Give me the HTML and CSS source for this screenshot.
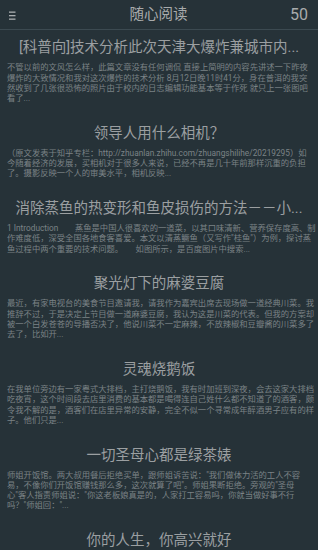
FILE: index.html
```html
<!DOCTYPE html>
<html lang="zh-CN">
<head>
<meta charset="utf-8">
<title>随心阅读</title>
<link rel="stylesheet" href="styles.css">
</head>
<body>
<div class="app">
  <header class="topbar">
    <span class="menu">
      <svg width="7" height="9" viewBox="0 0 7 9"><rect x="0" y="0.5" width="6.5" height="1.3" fill="#a9adaf"/><rect x="0" y="4" width="6.5" height="1.3" fill="#a9adaf"/><rect x="0" y="7.5" width="6.5" height="1.3" fill="#a9adaf"/></svg>
    </span>
    <span class="app-title">随心阅读</span>
    <span class="count">50</span>
  </header>
  <main class="list">
    <article class="item">
      <h2 class="item-title">[科普向]技术分析此次天津大爆炸兼城市内...</h2>
      <p class="item-body">不管以前的文风怎么样，此篇文章没有任何调侃 直接上简明的内容先讲述一下昨夜<br>爆炸的大致情况和我对这次爆炸的技术分析 8月12日晚11时41分，身在普洱的我突<br>然收到了几张很恐怖的照片由于校内的日志编辑功能基本等于作死 就只上一张图吧<br>看了...</p>
    </article>
    <article class="item">
      <h2 class="item-title">领导人用什么相机？</h2>
      <p class="item-body">（原文发表于知乎专栏：http://zhuanlan.zhihu.com/zhuangshilihe/20219295）如<br>今随着经济的发展，买相机对于很多人来说，已经不再是几十年前那样沉重的负担<br>了。摄影反映一个人的审美水平，相机反映...</p>
    </article>
    <article class="item">
      <h2 class="item-title">消除蒸鱼的热变形和鱼皮损伤的方法－－小...</h2>
      <p class="item-body">1 Introduction　　蒸鱼是中国人很喜欢的一道菜，以其口味清新、营养保存度高、制<br>作难度低，深受全国各地食客喜爱。本文以清蒸鳜鱼（又写作"桂鱼"）为例，探讨蒸<br>鱼过程中两个重要的技术问题。　　如图所示，是百度图片中搜索...</p>
    </article>
    <article class="item">
      <h2 class="item-title">聚光灯下的麻婆豆腐</h2>
      <p class="item-body">最近，有家电视台的美食节目邀请我，请我作为嘉宾出席去现场做一道经典川菜。我<br>推辞不过，于是决定上节目做一道麻婆豆腐，我认为这是川菜的代表。但我的方案却<br>被一个白发苍苍的导播否决了，他说川菜不一定麻辣，不放辣椒和豆瓣酱的川菜多了<br>去了，比如开...</p>
    </article>
    <article class="item">
      <h2 class="item-title">灵魂烧鹅饭</h2>
      <p class="item-body">在我单位旁边有一家粤式大排档，主打烧鹅饭，我有时加班到深夜，会去这家大排档<br>吃夜宵，这个时间段去店里消费的基本都是喝得连自己姓什么都不知道了的酒客，颇<br>令我不解的是，酒客们在店里异常的安静，完全不似一个寻常成年醉酒男子应有的样<br>子。他们只是...</p>
    </article>
    <article class="item">
      <h2 class="item-title">一切圣母心都是绿茶婊</h2>
      <p class="item-body">师姐开饭馆。两大叔用餐后拒绝买单，跟师姐诉苦说："我们做体力活的工人不容<br>易，不像你们开饭馆赚钱那么多，这次就算了吧"。师姐果断拒绝。旁观的"圣母<br>心"客人指责师姐说："你这老板娘真是的，人家打工容易吗，你就当做好事不行<br>吗？"师姐回："...</p>
    </article>
    <article class="item">
      <h2 class="item-title">你的人生，你高兴就好</h2>
    </article>
  </main>
</div>
</body>
</html>
```

FILE: styles.css
```css
* {
  box-sizing: border-box;
}

html, body {
  margin: 0;
  padding: 0;
  background: #263238;
}

body {
  font-family: Roboto, "Noto Sans CJK SC", sans-serif;
  width: 318px;
  height: 550px;
  overflow: hidden;
}

.app {
  display: flex;
  flex-direction: column;
}

.topbar {
  height: 30px;
  border-bottom: 1px solid #3c4a51;
  display: flex;
  align-items: center;
  justify-content: space-between;
  padding: 0 10px 0 9px;
}

.menu {
  display: flex;
  width: 20px;
  padding-top: 1px;
}

.app-title {
  font-size: 14.5px;
  color: #a9abac;
  line-height: 20px;
}

.count {
  font-size: 16px;
  color: #a9abac;
  line-height: 20px;
  width: 20px;
  text-align: right;
}

.list {
  display: flex;
  flex-direction: column;
}

.item {
  padding: 8.3px 3px 12.1px 7px;
  display: flex;
  flex-direction: column;
  gap: 4px;
}

.item-title {
  margin: 0 0 0 -4px;
  font-weight: normal;
  font-size: 14.5px;
  line-height: 20px;
  color: #9b9fa1;
  text-align: center;
  white-space: nowrap;
}

.item-body {
  margin: 0;
  font-size: 8.3px;
  line-height: 10.3px;
  color: #7b8286;
  white-space: nowrap;
}
```
